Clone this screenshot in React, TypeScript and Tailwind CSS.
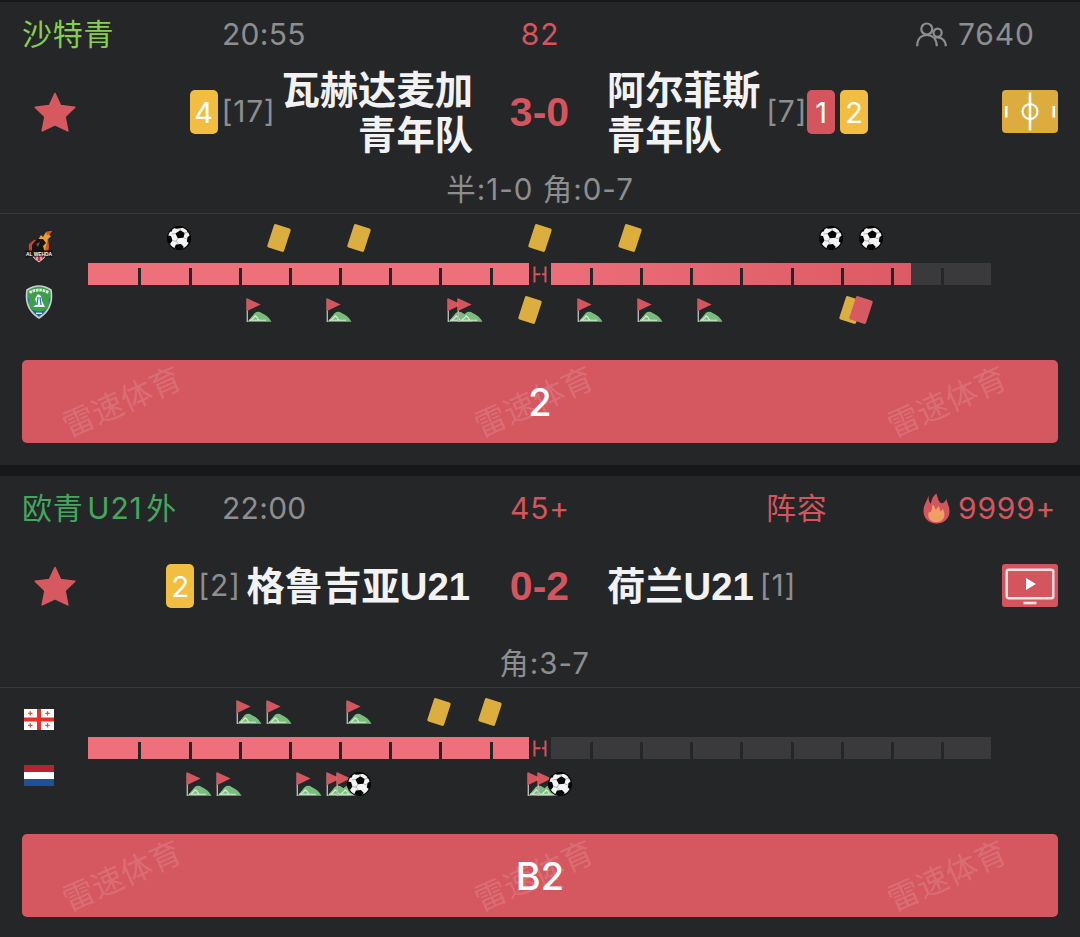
import type { ReactNode } from 'react'

type EventKind = 'goal' | 'yellow' | 'red' | 'corner'

interface MatchEvent {
  minute: number
  kind: EventKind
}

interface Team {
  name: string[]
  rank: number
  yellow?: number
  red?: number
  logo: ReactNode
  events: MatchEvent[]
}

interface Match {
  id: number
  league: string
  leagueColor: string
  time: string
  minute: string
  elapsed: number
  lineup: boolean
  hot: boolean
  viewers: string
  score: string
  detail: string
  live: 'animation' | 'video'
  tip: string
  home: Team
  away: Team
}

const ev = (kind: EventKind, ...minutes: number[]): MatchEvent[] =>
  minutes.map((minute) => ({ kind, minute }))

const matches: Match[] = [
  {
    id: 1,
    league: '沙特青',
    leagueColor: 'text-[#84cf50]',
    time: '20:55',
    minute: '82',
    elapsed: 82,
    lineup: false,
    hot: false,
    viewers: '7640',
    score: '3-0',
    detail: '半:1-0 角:0-7',
    live: 'animation',
    tip: '2',
    home: {
      name: ['瓦赫达麦加', '青年队'],
      rank: 17,
      yellow: 4,
      logo: <WehdaLogo />,
      events: [...ev('goal', 9), ...ev('yellow', 19, 27, 45, 54), ...ev('goal', 74, 78)],
    },
    away: {
      name: ['阿尔菲斯', '青年队'],
      rank: 7,
      red: 1,
      yellow: 2,
      logo: <FatehLogo />,
      events: [
        ...ev('corner', 17, 25, 37, 38),
        ...ev('yellow', 44),
        ...ev('corner', 50, 56, 62),
        ...ev('yellow', 76),
        ...ev('red', 77),
      ],
    },
  },
  {
    id: 2,
    league: '欧青U21外',
    leagueColor: 'text-[#46a65e]',
    time: '22:00',
    minute: '45+',
    elapsed: 45,
    lineup: true,
    hot: true,
    viewers: '9999+',
    score: '0-2',
    detail: ' 角:3-7',
    live: 'video',
    tip: 'B2',
    home: {
      name: ['格鲁吉亚U21'],
      rank: 2,
      yellow: 2,
      logo: <GeorgiaFlag />,
      events: [...ev('corner', 16, 19, 27), ...ev('yellow', 35, 40)],
    },
    away: {
      name: ['荷兰U21'],
      rank: 1,
      logo: <NetherlandsFlag />,
      events: [
        ...ev('corner', 11, 14, 22, 25, 26),
        ...ev('goal', 27),
        ...ev('corner', 45, 46),
        ...ev('goal', 47),
      ],
    },
  },
]

/* Team logos */

function WehdaLogo() {
  return (
    <svg width="30" height="32" viewBox="0 0 30 32" className="overflow-visible">
      <path d="M5 14 Q4 20 7 24 L23 24 Q26 19 24 13 L20 9 L10 10 Z" fill="#d3402c" />
      <path d="M14 10 L17 5 L19 7 L22 2 L28 1 L25 5 L27 6 L24 9 L24 18 L18 23 L12 20 Z" fill="#eba02e" />
      <path d="M22 2 L28 1 L26 4 L23 5 Z M24 8 L25 17 L21 20 Z" fill="#d9531e" />
      <path d="M8 22 L8 15 L13 9 L19 9 L22 13 L19 16 L21 23 Z" fill="#161412" />
      <path d="M12 14 L16 12 L14 17 Z" fill="#5b5b5b" />
      <path d="M8 24 L22 24 L20 28 L15 32 L10 28 Z" fill="#c5323c" stroke="#f4f4f4" strokeWidth="0.8" />
      <path d="M13 26 V30 M17 26 V30" stroke="#f4f4f4" strokeWidth="1" />
      <path d="M1 20.500 L29 20.500 L27 24 L29 28 L22 26.500 H8 L1 28 L3 24 Z" fill="#131313" />
      <text x="15" y="26" textAnchor="middle" textLength="26" lengthAdjust="spacingAndGlyphs" className="fill-white font-['Liberation_Sans'] text-[6px] font-bold">
        AL WEHDA
      </text>
    </svg>
  )
}

function FatehLogo() {
  return (
    <svg width="28" height="34" viewBox="0 0 28 34">
      <path d="M14 1 Q20 1 26 5 Q29 24 14 33 Q-1 24 2 5 Q8 1 14 1 Z" fill="#3d9f4a" stroke="#c9ced4" strokeWidth="1.6" />
      <path d="M5 23 Q9 28 14 31.500 Q19 28 23 23 Q19 26.500 14 26.500 Q9 26.500 5 23 Z" fill="#20629f" />
      <path d="M4.500 7.500 Q14 2.500 23.500 7.500" fill="none" stroke="#dcebdc" strokeWidth="2.800" strokeDasharray="2.600 0.800" />
      <path d="M2.500 12 L5 15 L3 18 Z M25.500 12 L23 15 L25 18 Z" fill="#2b73b8" />
      <path d="M13 9 L16 11 L17 16 L20 22 L8 22 L12 19 L10 14 Z" fill="#e9f1f6" />
      <path d="M13 12 L12 20 M15 12 L16 20" stroke="#2b73b8" strokeWidth="1.2" />
      <path d="M11 28.300 h6" stroke="#dcebf5" strokeWidth="1.4" />
    </svg>
  )
}

function GeorgiaFlag() {
  return (
    <svg width="30" height="21" viewBox="0 0 30 21">
      <path d="M0 0h30v21H0z" fill="#fff" />
      <path d="M13 0h4v21h-4z M0 8.500h30v4H0z" fill="#ec2f26" />
      <path
        d="M6.300 2.200v4.400 M4.100 4.400h4.400 M23.500 2.200v4.400 M21.300 4.400h4.400 M6.300 14.200v4.400 M4.100 16.400h4.400 M23.500 14.200v4.400 M21.300 16.400h4.400"
        stroke="#ec4a42"
        strokeWidth="1.3"
      />
    </svg>
  )
}

function NetherlandsFlag() {
  return (
    <svg width="30" height="21" viewBox="0 0 30 21">
      <path d="M0 0h30v21H0z" fill="#fff" />
      <path d="M0 0h30v7H0z" fill="#b72431" />
      <path d="M0 14h30v7H0z" fill="#214f98" />
    </svg>
  )
}

/* Icons */

function StarIcon() {
  return (
    <svg width="44" height="42" viewBox="0 0 44 42">
      <path
        d="M22 2.500 L27.600 14.600 L41.800 16.200 L32 25.600 L34.800 39.900 L22 33.800 L9.200 39.900 L12 25.600 L2.200 16.200 L16.400 14.600 Z"
        fill="#d75960"
        stroke="#d75960"
        strokeWidth="1.600"
        strokeLinejoin="round"
      />
    </svg>
  )
}

function ViewersIcon() {
  return (
    <svg width="31" height="25" viewBox="0 0 31 25" fill="none" stroke="#8e8e90" strokeWidth="2.200">
      <circle cx="10.800" cy="7" r="5.500" />
      <path d="M1.200 24.200 C1.200 16.500 5.500 13 10.800 13 C16.100 13 20.600 16.500 20.800 24.200" />
      <circle cx="21.600" cy="10.800" r="4.100" />
      <path d="M18.800 15.800 C25.500 14.200 29.600 18.500 29.800 24.200" />
    </svg>
  )
}

function FlameIcon() {
  return (
    <svg width="27" height="31" viewBox="0 0 27 31">
      <path
        d="M13.300 0.500 C14.500 3 14.500 6.500 17 9.500 C18.500 11 21.500 10.500 23.500 5.500 C23.300 9 26.500 12 26.500 18.500 C26.500 26 20.500 30.500 13.500 30.500 C6 30.500 0.500 25.500 0.500 18 C0.500 12 4 8 5.500 2.500 C5.600 6 6 8.500 7.300 10.800 C8.800 9.500 8.300 4 13.300 0.500 Z"
        fill="#d5555e"
      />
      <path
        d="M9.500 11.500 C11.500 13 11.800 15 12.500 16.500 C13.800 16 14.800 14.800 15.200 13 C17 15 17 17 17.500 18.500 C18.500 18 19.200 17 19.500 15.500 C23.300 21 21.500 29 13.500 29.200 C6 29 4 23.500 6 18.500 C6.800 19.500 7.300 19.500 7.800 19.200 C8.800 17 9.200 14 9.500 11.500 Z"
        fill="#eda061"
      />
    </svg>
  )
}

function PitchIcon() {
  return (
    <svg width="56" height="43" viewBox="0 0 56 43">
      <rect width="56" height="43" rx="4" fill="#dcac3e" />
      <circle cx="28" cy="21.500" r="7.500" fill="none" stroke="#fff" strokeWidth="2.200" />
      <path d="M28 2.500v38" stroke="#fff" strokeWidth="2.600" />
      <path d="M4.200 16v11.500 M51.800 16v11.500" stroke="#fff" strokeWidth="2.600" />
    </svg>
  )
}

function VideoIcon() {
  return (
    <svg width="56" height="43" viewBox="0 0 56 43">
      <rect width="56" height="43" rx="3" fill="#d5555e" />
      <rect x="4.700" y="5.700" width="46.600" height="28.600" rx="2" fill="none" stroke="#f8e4e5" strokeWidth="2.400" />
      <path d="M24 14v12l10-6z" fill="#fff" />
      <path d="M21.500 39h13" stroke="#f8e4e5" strokeWidth="2.600" />
    </svg>
  )
}

function BallIcon() {
  return (
    <svg width="25" height="25" viewBox="0 0 25 25">
      <circle cx="12.500" cy="12.500" r="12" fill="#050505" />
      <circle cx="12.500" cy="12.500" r="10.800" fill="#f4f4f4" />
      <path d="M13.800 4.800 L18.200 7.400 L17 12.200 L11.300 12.700 L8.900 8 Z" fill="#050505" />
      <path d="M8 1.500 L14 0.500 L17 2 L13 3 L9 3.200 Z" fill="#050505" />
      <path d="M1 10 L4.500 10.500 L6 15 L3.500 18.500 L1 16 Z" fill="#050505" />
      <path d="M24.200 9.500 L21 11.500 L20.300 16 L22.800 18 L24.500 14 Z" fill="#050505" />
      <path d="M9.500 19 L14.500 18.400 L17.300 21.500 L14.500 24.500 L10.500 24.300 L8 22 Z" fill="#050505" />
      <path d="M19.500 3.200 L22.500 6.500 L21.500 7.200 Z M2.500 6 L6 2.800 L5.500 6 Z" fill="#050505" />
      <path d="M11.300 12.700 L9.800 15.800 L12 18.700 M17 12.200 L20.300 13.500 M9.800 15.800 L5.600 15 M8.900 8 L5 8.500 M13.800 4.800 L13.300 2.500 M18.200 7.400 L21.500 7" fill="none" stroke="#a5a5a5" strokeWidth="0.800" />
    </svg>
  )
}

function CardIcon({ color }: { color: string }) {
  return (
    <svg width="26" height="30" viewBox="0 0 26 30">
      <rect x="4.200" y="2.800" width="17.600" height="24.400" rx="1.800" fill={color} transform="rotate(18 13 15)" />
    </svg>
  )
}

function CornerIcon() {
  return (
    <svg width="26" height="24" viewBox="0 0 26 24">
      <path d="M1.500 23.800 L8.500 15.200 Q12 12.500 16 15.200 Q22 17.500 25.500 23.800 Z" fill="#79bd7c" />
      <path d="M3 22.300h17 M5 22 L9.500 18 L13 22 M8 18.200 Q11.500 17.500 12 22" fill="none" stroke="#d5ead3" strokeWidth="1.100" />
      <path d="M1.300 1v23" stroke="#b5b5b5" strokeWidth="1.400" />
      <path d="M0.600 0 L14.600 6.600 L0.600 13.300 Z" fill="#d5555e" />
    </svg>
  )
}

function HalfTimeMark() {
  return (
    <svg width="14" height="17" viewBox="0 0 14 17">
      <path d="M1.500 0.500v16 M12.500 0.500v16 M1.500 8.200h6 M9 8.200h3.500" fill="none" stroke="#d5555e" strokeWidth="2" />
    </svg>
  )
}

const eventIcons: Record<EventKind, ReactNode> = {
  goal: <BallIcon />,
  yellow: <CardIcon color="#dcae3e" />,
  red: <CardIcon color="#d75a62" />,
  corner: <CornerIcon />,
}

/* Match card parts */

function CardCount({ value, red = false }: { value: number; red?: boolean }) {
  return (
    <span
      className={`flex h-[44px] w-[28px] shrink-0 items-center justify-center rounded-[5px] pt-[2px] text-[29px] text-white ${
        red ? 'bg-[#d5555e]' : 'bg-[#f2be42]'
      }`}
    >
      {value}
    </span>
  )
}

function TeamName({ lines }: { lines: string[] }) {
  return (
    <h2 className="shrink-0 pt-[4px] font-['Liberation_Sans','Noto_Sans_CJK_SC',sans-serif] text-[38.3px] leading-[44.5px] font-semibold whitespace-nowrap text-[#f2f2f3]">
      {lines.map((line) => (
        <div key={line}>{line}</div>
      ))}
    </h2>
  )
}

function EventRow({ events, className }: { events: MatchEvent[]; className: string }) {
  return (
    <div className={`relative ${className}`}>
      {events.map((event, index) => (
        <span
          key={index}
          className="absolute top-1/2 -translate-x-1/2 -translate-y-1/2"
          style={{ left: `${(event.minute / 90) * 100}%` }}
        >
          {eventIcons[event.kind]}
        </span>
      ))}
    </div>
  )
}

function ProgressBar({ elapsed }: { elapsed: number }) {
  // the half time gap covers the first minute or so of the second half
  const secondHalf = Math.max(0, ((elapsed - 46.2) / 43.8) * 100)

  return (
    <div className="relative flex h-[22px]">
      <div className="flex-1 bg-[#ed707b]" />
      <div className="z-10 flex w-[22px] items-center justify-center bg-[#252628]">
        <HalfTimeMark />
      </div>
      <div className="flex-1 bg-[#3a3a3c]">
        <div className="h-full bg-linear-to-r from-[#ec6e79] to-[#dc5a64]" style={{ width: `${secondHalf}%` }} />
      </div>
      {/* One tick every five minutes */}
      <div className="absolute inset-x-0 bottom-0 grid h-[17px] grid-cols-18">
        {Array.from({ length: 18 }, (_, i) => (
          <div key={i} className={i === 0 ? '' : 'border-l-[3px] border-[#252628]'} />
        ))}
      </div>
    </div>
  )
}

function TipButton({ label }: { label: string }) {
  return (
    <button className="relative mx-[22px] flex h-[83px] w-[1036px] items-center justify-center rounded-[5px] bg-[#d5575f]">
      <span className="absolute inset-0 flex items-center justify-between pr-[48px] pl-[37px] text-[31.500px] text-white/15">
        <span className="-rotate-24">雷速体育</span>
        <span className="-rotate-24">雷速体育</span>
        <span className="-rotate-24">雷速体育</span>
      </span>
      <span className="relative pt-[1px] text-[38px] font-medium text-white">{label}</span>
    </button>
  )
}

function MatchCard({ match }: { match: Match }) {
  const { home, away } = match

  return (
    <article className="h-[463px] shrink-0 bg-[#252628]">
      {/* Header */}
      <header className="grid h-[64px] grid-cols-[200px_200px_236px_258px_1fr] items-center px-[22px] text-[30px] tracking-[0.8px] whitespace-nowrap text-[#8e8e90]">
        <span className={`[text-autospace:normal] ${match.leagueColor}`}>{match.league}</span>
        <span className="tracking-[0.3px]">{match.time}</span>
        <span className="text-center text-[#d5555e]">{match.minute}</span>
        <span className="pl-[108px] text-[#d5555e]">{match.lineup && '阵容'}</span>
        <span className={`flex items-center ${match.hot ? 'text-[#d5555e]' : ''}`}>
          <span className={`w-[42px] shrink-0 ${match.hot ? 'pl-[7px]' : ''}`}>
            {match.hot ? <FlameIcon /> : <ViewersIcon />}
          </span>
          {match.viewers}
        </span>
      </header>

      {/* Teams and score */}
      <section className="flex h-[91px] items-center px-[22px]">
        <div className="w-[66px] pt-[1px] pl-[11px]">
          <StarIcon />
        </div>
        <div className="flex w-[385px] items-center justify-end">
          {home.yellow && <CardCount value={home.yellow} />}
          <span className="pr-[6px] pl-[4px] text-[30px] tracking-[0.7px] text-[#8e8e90]">[{home.rank}]</span>
          <div className={`text-right ${home.name.length === 1 ? 'pr-[3px]' : ''}`}>
            <TeamName lines={home.name} />
          </div>
        </div>
        <div className="w-[133px] pt-[2px] text-center font-['Liberation_Sans',sans-serif] text-[41px] font-bold text-[#d5555e]">
          {match.score}
        </div>
        <div className="flex flex-1 items-center pl-[1px]">
          <TeamName lines={away.name} />
          <span className="pl-[6px] text-[30px] tracking-[0.7px] text-[#8e8e90]">[{away.rank}]</span>
          <div className="flex gap-[5px]">
            {away.red && <CardCount value={away.red} red />}
            {away.yellow && <CardCount value={away.yellow} />}
          </div>
        </div>
        {match.live === 'video' ? <VideoIcon /> : <PitchIcon />}
      </section>

      <p className="h-[56px] pt-[10px] text-center text-[29.500px] leading-[44px] tracking-[1px] whitespace-pre-wrap text-[#8e8e90]">
        {match.detail}
      </p>

      {/* Timeline */}
      <section className="flex h-[147px] border-t border-[#38393b]">
        <div className="flex w-[88.3px] flex-col gap-[22px] pt-[14.500px] pl-[22px]">
          <div className="flex h-[34px] w-[34px] items-center justify-center">{home.logo}</div>
          <div className="flex h-[34px] w-[34px] items-center justify-center">{away.logo}</div>
        </div>
        <div className="w-[903px]">
          <EventRow events={home.events} className="mb-[1px] h-[48px]" />
          <ProgressBar elapsed={match.elapsed} />
          <EventRow events={away.events} className="h-[50px]" />
        </div>
      </section>

      <TipButton label={match.tip} />
    </article>
  )
}

export default function App() {
  return (
    <main className="flex h-[937px] w-[1080px] flex-col gap-[11px] overflow-hidden bg-[#17181a] pt-[2px] font-['Inter','Noto_Sans_CJK_SC',sans-serif]">
      {matches.map((match) => (
        <MatchCard key={match.id} match={match} />
      ))}
    </main>
  )
}
